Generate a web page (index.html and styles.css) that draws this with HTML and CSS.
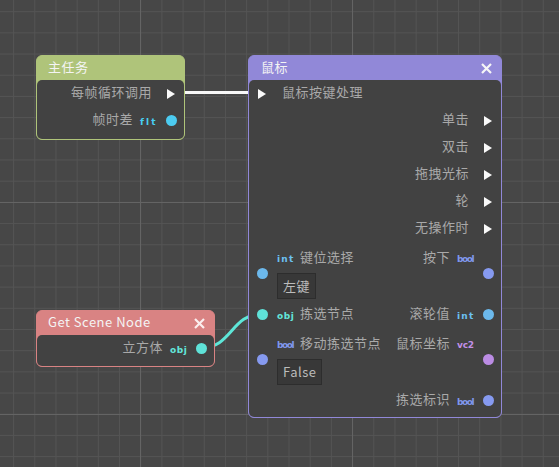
FILE: index.html
```html
<!DOCTYPE html>
<html>
<head>
<meta charset="utf-8">
<link rel="stylesheet" href="styles.css">
</head>
<body>
<div class="canvas">
  <svg class="wires" width="559" height="467" viewBox="0 0 559 467">
    <line x1="176" y1="92.5" x2="258" y2="92.5" stroke="#f8f8f8" stroke-width="3"/>
    <path d="M201 348 C 232 348, 231 314, 262 314" fill="none" stroke="#5ee6d8" stroke-width="3"/>
  </svg>

  <div class="node node-main">
    <div class="node-head"><span class="title">主任务</span></div>
    <div class="node-body">
      <div class="row row-right">
        <span class="label exec-out">每帧循环调用</span>
        <span class="slot"><svg class="arrow" width="8" height="10" viewBox="0 0 8 10"><polygon points="0,0 8,5 0,10"/></svg></span>
      </div>
      <div class="row row-right">
        <span class="label">帧时差</span>
        <span class="type t-flt">flt</span>
        <span class="slot"><span class="pin p-flt"></span></span>
      </div>
    </div>
  </div>

  <div class="node node-mouse">
    <div class="node-head">
      <span class="title">鼠标</span>
      <svg class="close" width="11" height="11" viewBox="0 0 11 11"><path d="M1 1 L10 10 M10 1 L1 10"/></svg>
    </div>
    <div class="node-body">
      <div class="row">
        <span class="slot"><svg class="arrow" width="8" height="10" viewBox="0 0 8 10"><polygon points="0,0 8,5 0,10"/></svg></span>
        <span class="label exec-in">鼠标按键处理</span>
      </div>
      <div class="row row-right">
        <span class="label exec-out">单击</span>
        <span class="slot"><svg class="arrow" width="8" height="10" viewBox="0 0 8 10"><polygon points="0,0 8,5 0,10"/></svg></span>
      </div>
      <div class="row row-right">
        <span class="label exec-out">双击</span>
        <span class="slot"><svg class="arrow" width="8" height="10" viewBox="0 0 8 10"><polygon points="0,0 8,5 0,10"/></svg></span>
      </div>
      <div class="row row-right">
        <span class="label exec-out">拖拽光标</span>
        <span class="slot"><svg class="arrow" width="8" height="10" viewBox="0 0 8 10"><polygon points="0,0 8,5 0,10"/></svg></span>
      </div>
      <div class="row row-right">
        <span class="label exec-out">轮</span>
        <span class="slot"><svg class="arrow" width="8" height="10" viewBox="0 0 8 10"><polygon points="0,0 8,5 0,10"/></svg></span>
      </div>
      <div class="row row-right">
        <span class="label exec-out">无操作时</span>
        <span class="slot"><svg class="arrow" width="8" height="10" viewBox="0 0 8 10"><polygon points="0,0 8,5 0,10"/></svg></span>
      </div>

      <div class="block">
        <span class="slot"><span class="pin p-int"></span></span>
        <div class="block-col">
          <div class="block-labels">
            <span class="side"><span class="type t-int">int</span><span class="label">键位选择</span></span>
            <span class="side"><span class="label">按下</span><span class="type t-bool">bool</span></span>
          </div>
          <div class="input">左键</div>
        </div>
        <span class="slot"><span class="pin p-bool"></span></span>
      </div>

      <div class="row row-split">
        <span class="side">
          <span class="slot"><span class="pin p-obj"></span></span>
          <span class="type t-obj in-type">obj</span><span class="label">拣选节点</span>
        </span>
        <span class="side">
          <span class="label">滚轮值</span><span class="type t-int">int</span>
          <span class="slot"><span class="pin p-int"></span></span>
        </span>
      </div>

      <div class="block">
        <span class="slot"><span class="pin p-bool"></span></span>
        <div class="block-col">
          <div class="block-labels">
            <span class="side"><span class="type t-bool">bool</span><span class="label">移动拣选节点</span></span>
            <span class="side"><span class="label">鼠标坐标</span><span class="type t-vc2">vc2</span></span>
          </div>
          <div class="input">False</div>
        </div>
        <span class="slot"><span class="pin p-vc2"></span></span>
      </div>

      <div class="row row-right">
        <span class="label">拣选标识</span>
        <span class="type t-bool">bool</span>
        <span class="slot"><span class="pin p-bool"></span></span>
      </div>
    </div>
  </div>

  <div class="node node-scene">
    <div class="node-head">
      <span class="title">Get Scene Node</span>
      <svg class="close" width="11" height="11" viewBox="0 0 11 11"><path d="M1 1 L10 10 M10 1 L1 10"/></svg>
    </div>
    <div class="node-body">
      <div class="row row-right">
        <span class="label">立方体</span>
        <span class="type t-obj">obj</span>
        <span class="slot"><span class="pin p-obj"></span></span>
      </div>
    </div>
  </div>
</div>
</body>
</html>
```

FILE: styles.css
```css
* { box-sizing: border-box; }
html, body { margin: 0; padding: 0; }
body {
  font-family: "Noto Sans CJK SC", "Noto Sans", sans-serif;
  font-size: 13px;
  letter-spacing: 0.5px;
}
.canvas {
  position: relative;
  width: 559px;
  height: 467px;
  overflow: hidden;
  background-color: #474747;
  background-image:
    linear-gradient(#646464 1px, transparent 1px),
    linear-gradient(90deg, #646464 1px, transparent 1px),
    linear-gradient(#545454 1px, transparent 1px),
    linear-gradient(90deg, #545454 1px, transparent 1px);
  background-size: 212px 212px, 212px 212px, 21.2px 21.2px, 21.2px 21.2px;
  background-position: 0 202px, 140px 0, 0 11.2px, 13.1px 0;
}
.wires {
  position: absolute;
  left: 0;
  top: 0;
}
.node {
  position: absolute;
  border: 1px solid;
  border-radius: 6px;
}
.node-main { left: 36px; top: 55px; width: 149px; background: #afc47a; border-color: #afc47a; }
.node-mouse { left: 248px; top: 55px; width: 254px; background: #9188d8; border-color: #9188d8; }
.node-scene { left: 36px; top: 310px; width: 179px; background: #d98383; border-color: #d98383; }

.node-head {
  height: 24px;
  display: flex;
  align-items: center;
  justify-content: space-between;
  padding: 0 9px 0 11px;
  color: #f4f4f4;
}
.node-mouse .node-head { padding-left: 12px; }
.title { line-height: 1; padding-bottom: 4px; }
.close path { stroke: #f6f6f6; stroke-width: 2.2; fill: none; }
.node-scene .close path { stroke: #fbeeee; }

.node-body {
  background: #424242;
  border-radius: 5px;
  padding: 0 7px 5px 7px;
}
.node-mouse .node-body { padding-bottom: 3px; }
.node-scene .node-body { padding-bottom: 4px; }

.row {
  height: 27px;
  display: flex;
  align-items: center;
}
.row-right { justify-content: flex-end; }
.row-split { justify-content: space-between; }

.side { display: flex; align-items: center; }

.label { color: #a9a9a9; white-space: nowrap; line-height: 1; padding-bottom: 4px; }
.exec-in { margin-left: 14px; }
.exec-out { margin-right: 13px; }

.slot {
  width: 12px;
  height: 12px;
  flex: none;
  display: flex;
  align-items: center;
  justify-content: center;
}
.arrow polygon { fill: #fafafa; }
.pin {
  width: 11px;
  height: 11px;
  border-radius: 50%;
  flex: none;
}
.p-flt { background: #4ccbf0; }
.p-int { background: #6cb9ec; }
.p-bool { background: #869af0; }
.p-obj { background: #5fe2d8; }
.p-vc2 { background: #bb8ce4; }

.type {
  font-family: "DejaVu Sans", sans-serif;
  font-weight: bold;
  font-size: 9px;
  line-height: 1;
  width: 17px;
  padding-top: 3px;
  flex: none;
  white-space: nowrap;
  overflow: visible;
}
.row-right .type, .side .label + .type { margin-left: 7px; margin-right: 8px; }
.side .type + .label, .in-type + .label { margin-left: 6px; }
.in-type { margin-left: 9px; }
.t-flt { color: #48cff2; letter-spacing: 2.1px; }
.t-int { color: #6cc0f2; letter-spacing: 1.2px; }
.t-obj { color: #62e6da; letter-spacing: 0.5px; }
.t-bool { color: #8098ee; letter-spacing: -1.4px; }
.t-vc2 { color: #c190e8; letter-spacing: -0.2px; }

.block {
  display: flex;
  align-items: center;
  padding: 6px 0 2px 0;
}
.block-col {
  flex: 1;
  display: flex;
  flex-direction: column;
  align-items: flex-start;
  margin-left: 9px;
}
.block-labels {
  height: 20px;
  width: 100%;
  display: flex;
  align-items: center;
  justify-content: space-between;
}
.block-labels .side:last-child .type { margin-right: 8px; }
.input {
  margin-top: 5px;
  height: 26px;
  padding: 0 5px 2px 5px;
  display: flex;
  align-items: center;
  background: #383838;
  border: 1px solid #2d2d2d;
  color: #bcbcbc;
  line-height: 1;
}
```
